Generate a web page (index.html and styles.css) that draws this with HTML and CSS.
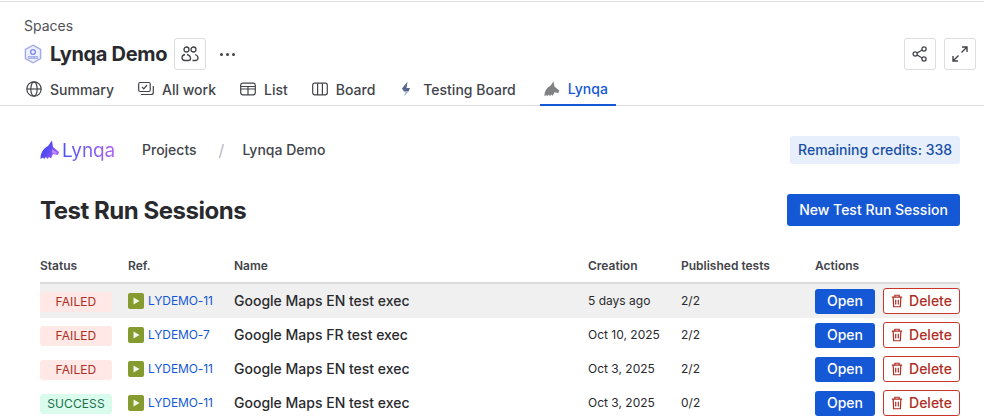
FILE: index.html
```html
<!DOCTYPE html>
<html>
<head>
  <meta charset="UTF-8">
  <title>Lynqa Demo</title>
  <link rel="stylesheet" href="styles.css">
</head>
<body>
  <svg class="defs" width="0" height="0">
    <defs>
      <linearGradient id="catGrad" x1="0" y1="0" x2="1" y2=".6">
        <stop offset="0" stop-color="#3c46ee"/>
        <stop offset=".55" stop-color="#5a4cf2"/>
        <stop offset="1" stop-color="#a85cf4"/>
      </linearGradient>
      <symbol id="play" viewBox="0 0 16 16">
        <rect width="16" height="16" rx="2" fill="#859a2f"/>
        <path d="M5.500 4.500 11.500 8 5.500 11.500z" fill="#f4f6e8"/>
      </symbol>
      <symbol id="trash" viewBox="0 0 14 16">
        <path d="M1 3.500h12M4.500 3.500V1.300h5v2.200M2.500 3.500l.6 11.200h7.800l.6-11.200M5.500 6.500v5.500M8.500 6.500v5.500" fill="none" stroke="currentColor" stroke-width="1.400"/>
      </symbol>
    </defs>
  </svg>

  <header class="space-head">
    <div class="crumb">Spaces</div>
    <div class="title-row">
      <svg class="space-icon" width="18" height="20" viewBox="0 0 18 20">
        <path d="M9 1.200 16.600 5.500v9L9 18.800 1.400 14.500v-9z" fill="#eef0fd" stroke="#a0abee" stroke-width="1.400"/>
        <circle cx="9" cy="8" r="2.400" fill="none" stroke="#7f8de2" stroke-width="1.400"/>
        <text class="demo-text" x="9" y="14.500">DEMO</text>
      </svg>
      <h1>Lynqa Demo</h1>
      <button class="icon-btn">
        <svg width="18" height="18" viewBox="0 0 18 18" fill="none" stroke="#42444a" stroke-width="1.300">
          <circle cx="5.500" cy="4.500" r="2.500"/>
          <circle cx="12.500" cy="4.500" r="2.500"/>
          <path d="M4 9.500C1.800 10 1 11.300 1 12.700 1 14.500 2.500 15.500 4 15.500h3.500c1.500 0 2-1 2-2 0-1.800-1.500-3.500-3.500-4M11.500 15.500H14c1.800 0 3-1 3-2.500 0-1.800-1.300-3-3-3.500"/>
        </svg>
      </button>
      <button class="more">
        <i></i><i></i><i></i>
      </button>
      <div class="head-actions">
        <button class="icon-btn">
          <svg width="16" height="16" viewBox="0 0 16 16" fill="none" stroke="#42444a" stroke-width="1.300">
            <circle cx="3.200" cy="8" r="2.100"/>
            <circle cx="12" cy="3" r="2.100"/>
            <circle cx="12" cy="13" r="2.100"/>
            <path d="M5 7 10.200 4M5 9l5.200 3"/>
          </svg>
        </button>
        <button class="icon-btn">
          <svg width="16" height="16" viewBox="0 0 16 16" fill="none" stroke="#42444a" stroke-width="1.400">
            <path d="M9.500 6.500 15 1M10 1h5v5M6.500 9.500 1 15M1 10v5h5"/>
          </svg>
        </button>
      </div>
    </div>
    <nav class="tabs">
      <a class="tab">
        <svg width="16" height="16" viewBox="0 0 16 16" fill="none" stroke="#42444a" stroke-width="1.200">
          <circle cx="8" cy="8" r="7.200"/>
          <ellipse cx="8" cy="8" rx="3.200" ry="7.200"/>
          <path d="M1 8h14"/>
        </svg>
        Summary
      </a>
      <a class="tab">
        <svg width="16" height="16" viewBox="0 0 16 16" fill="none" stroke="#42444a" stroke-width="1.200">
          <rect x=".7" y="1.500" width="11.500" height="9" rx="1.500"/>
          <path d="M4 6l1.800 1.800L9 4M15.300 5v6.500a2 2 0 0 1-2 2H3"/>
        </svg>
        All work
      </a>
      <a class="tab">
        <svg width="16" height="16" viewBox="0 0 16 16" fill="none" stroke="#42444a" stroke-width="1.200">
          <rect x=".7" y="2.200" width="14.600" height="11.600" rx="2"/>
          <path d="M.7 8h14.600M.7 5.500h14.600M8 5.500v8.300"/>
        </svg>
        List
      </a>
      <a class="tab">
        <svg width="16" height="16" viewBox="0 0 16 16" fill="none" stroke="#42444a" stroke-width="1.200">
          <rect x=".7" y="2.200" width="14.600" height="11.600" rx="2"/>
          <path d="M5.600 2.200v11.600M10.400 2.200v11.600"/>
        </svg>
        Board
      </a>
      <a class="tab">
        <svg width="16" height="16" viewBox="0 0 16 16">
          <path d="M8.500 .8 3 7.500 5 10.500H9.500L11 7H7.500z" fill="#56658a"/>
          <path d="M9.500 10.500H6.500L5 15.500z" fill="#aab3c6"/>
        </svg>
        Testing Board
      </a>
      <a class="tab active">
        <svg width="16" height="16" viewBox="0 0 20 20">
          <path d="M.5 19C.5 13 3 8.500 8 6L12 .5l1 6.500 6 5-1 3-5-1-2 4.500-2-1.500-1.500 2-1.500-2-2 2-1-1.500z" fill="#7f8184"/>
        </svg>
        Lynqa
      </a>
    </nav>
  </header>

  <main class="content">
    <div class="app-bar">
      <div class="brand">
        <svg width="20" height="20" viewBox="0 0 20 20">
          <path d="M.5 19C.5 13 3 8.500 8 6L12 .5l1 6.500 6 5-1 3-5-1-2 4.500-2-1.500-1.500 2-1.500-2-2 2-1-1.500z" fill="url(#catGrad)"/>
          <path d="M12 9l5 3.500-1 1.500-4-1z" fill="#b78cf8"/>
        </svg>
        <span class="brand-name">Lynqa</span>
      </div>
      <span class="bc">Projects</span>
      <span class="bc-sep">/</span>
      <span class="bc">Lynqa Demo</span>
      <span class="credits">Remaining credits: 338</span>
    </div>

    <div class="page-head">
      <h2>Test Run Sessions</h2>
      <button class="btn-primary">New Test Run Session</button>
    </div>

    <table class="sessions">
      <colgroup>
        <col class="c-status"><col class="c-ref"><col class="c-name"><col class="c-date"><col class="c-pub"><col class="c-act">
      </colgroup>
      <thead>
        <tr><th>Status</th><th>Ref.</th><th>Name</th><th>Creation</th><th>Published tests</th><th>Actions</th></tr>
      </thead>
      <tbody>
        <tr class="hover">
          <td><span class="lozenge failed">FAILED</span></td>
          <td><span class="ref"><svg width="16" height="16"><use href="#play"/></svg><a>LYDEMO-11</a></span></td>
          <td class="name">Google Maps EN test exec</td>
          <td>5 days ago</td>
          <td>2/2</td>
          <td><span class="acts"><button class="open">Open</button><button class="del"><svg width="12" height="14"><use href="#trash"/></svg>Delete</button></span></td>
        </tr>
        <tr>
          <td><span class="lozenge failed">FAILED</span></td>
          <td><span class="ref"><svg width="16" height="16"><use href="#play"/></svg><a>LYDEMO-7</a></span></td>
          <td class="name">Google Maps FR test exec</td>
          <td>Oct 10, 2025</td>
          <td>2/2</td>
          <td><span class="acts"><button class="open">Open</button><button class="del"><svg width="12" height="14"><use href="#trash"/></svg>Delete</button></span></td>
        </tr>
        <tr>
          <td><span class="lozenge failed">FAILED</span></td>
          <td><span class="ref"><svg width="16" height="16"><use href="#play"/></svg><a>LYDEMO-11</a></span></td>
          <td class="name">Google Maps EN test exec</td>
          <td>Oct 3, 2025</td>
          <td>2/2</td>
          <td><span class="acts"><button class="open">Open</button><button class="del"><svg width="12" height="14"><use href="#trash"/></svg>Delete</button></span></td>
        </tr>
        <tr>
          <td><span class="lozenge success">SUCCESS</span></td>
          <td><span class="ref"><svg width="16" height="16"><use href="#play"/></svg><a>LYDEMO-11</a></span></td>
          <td class="name">Google Maps EN test exec</td>
          <td>Oct 3, 2025</td>
          <td>0/2</td>
          <td><span class="acts"><button class="open">Open</button><button class="del"><svg width="12" height="14"><use href="#trash"/></svg>Delete</button></span></td>
        </tr>
      </tbody>
    </table>
  </main>
</body>
</html>
```

FILE: styles.css
```css
html, body {
  height: 420px;
  overflow: hidden;
}
body {
  margin: 0;
  background-color: #fff;
  color: #292a2e;
  font-family: Inter, "Liberation Sans", sans-serif;
  font-size: 14px;
}
button {
  font-family: inherit;
  cursor: pointer;
}
.defs {
  position: absolute;
}

.space-head {
  margin-top: 1px;
  border-top: 1px solid #e2e2e4;
  border-bottom: 1px solid #dcdcde;
  padding: 16px 8px 0 24px;
  height: 87px;
}
.crumb {
  color: #505258;
  font-size: 14px;
  line-height: 16px;
}
.title-row {
  display: flex;
  align-items: center;
  height: 32px;
  margin-top: 4px;
}
.space-icon {
  margin-right: 8px;
}
.demo-text {
  font-size: 3.500px;
  font-weight: 700;
  text-anchor: middle;
  fill: #7f8de2;
}
h1 {
  margin: 0 7px 0 0;
  font-size: 20px;
  font-weight: 700;
  line-height: 24px;
  letter-spacing: -0.3px;
}
.icon-btn {
  display: flex;
  align-items: center;
  justify-content: center;
  width: 32px;
  height: 32px;
  padding: 0;
  background: #fff;
  border: 1px solid #dcdcde;
  border-radius: 3px;
}
.more {
  display: flex;
  gap: 3px;
  margin-left: 14px;
  padding: 0;
  border: 0;
  background: none;
}
.more i {
  width: 3px;
  height: 3px;
  border-radius: 50%;
  background: #42444a;
}
.head-actions {
  display: flex;
  gap: 8px;
  margin-left: auto;
}
.tabs {
  display: flex;
  gap: 24px;
  margin-top: 1px;
  height: 35px;
}
.tab {
  display: flex;
  align-items: center;
  gap: 8px;
  height: 32px;
  padding-top: 2px;
  color: #42444a;
  font-weight: 500;
  font-size: 14px;
  margin-left: 2px;
  margin-right: -2px;
}
.tab.active {
  color: #1558d6;
  border-bottom: 2px solid #1558d6;
  margin: 0 0 0 2px;
  padding: 2px 8px 0 4px;
  height: 31px;
}

.content {
  padding: 30px 24px 0 40px;
}
.app-bar {
  display: flex;
  align-items: center;
  height: 28px;
}
.brand {
  display: flex;
  align-items: center;
  gap: 2px;
  width: 102px;
}
.brand-name {
  font-size: 19px;
  letter-spacing: -0.1px;
  background: linear-gradient(90deg, #4a55f0, #b163ee);
  -webkit-background-clip: text;
  background-clip: text;
  color: transparent;
}
.bc {
  color: #42444a;
  font-weight: 500;
  font-size: 14px;
  padding-bottom: 2px;
}
.bc-sep {
  color: #b5b7bb;
  font-size: 16px;
  margin: 0 18px 0 22px;
}
.credits {
  margin-left: auto;
  padding: 0 8px;
  line-height: 28px;
  color: #174ea6;
  background: #e6effb;
  border-radius: 3px;
  font-weight: 500;
}
.page-head {
  display: flex;
  align-items: center;
  justify-content: space-between;
  margin-top: 30px;
  height: 32px;
}
h2 {
  margin: 0;
  font-size: 24px;
  font-weight: 700;
  letter-spacing: -0.47px;
}
.btn-primary {
  height: 32px;
  width: 173px;
  padding: 0 0 2px;
  border: 0;
  border-radius: 3px;
  background: #1558d6;
  color: #fff;
  font-size: 14px;
  font-weight: 500;
}

.sessions {
  table-layout: fixed;
  width: 920px;
  margin-top: 24px;
  border-collapse: collapse;
  font-size: 12px;
}
.c-status { width: 88px; }
.c-ref { width: 106px; }
.c-name { width: 354px; }
.c-date { width: 93px; }
.c-pub { width: 134px; }
.c-act { width: 145px; }
th {
  height: 30px;
  padding: 0 0 2px;
  text-align: left;
  color: #42444a;
  font-weight: 600;
  font-size: 12px;
  border-bottom: 2px solid #dcdcde;
}
td {
  height: 32px;
  padding: 0 0 2px;
  font-weight: 400;
}
tr.hover td {
  background: #f0f0f0;
}
.lozenge {
  display: block;
  width: 72px;
  height: 20px;
  margin-top: 4px;
  line-height: 20px;
  text-align: center;
  font-size: 12px;
  letter-spacing: 0.1px;
  border-radius: 3px;
}
.failed {
  background: #ffe8e6;
  color: #ae2e24;
}
.success {
  background: #d9fcec;
  color: #216e4e;
}
.ref {
  display: flex;
  align-items: center;
  gap: 4px;
  margin-top: 2px;
  color: #1558d6;
  letter-spacing: -0.1px;
}
.ref a {
  margin-top: -2px;
}
.name {
  font-size: 14px;
  font-weight: 500;
}
.acts {
  display: flex;
  align-items: center;
  gap: 8px;
  margin-top: 2px;
}
.open {
  width: 60px;
  height: 25px;
  padding: 0 0 2px;
  border: 0;
  border-radius: 3px;
  background: #1558d6;
  color: #fff;
  font-size: 14px;
  font-weight: 500;
}
.del {
  display: flex;
  align-items: center;
  justify-content: center;
  gap: 6px;
  width: 77px;
  height: 26px;
  padding: 0 0 1px;
  background: #fff;
  border: 1px solid #c9372c;
  border-radius: 3px;
  color: #ae2e24;
  font-size: 14px;
  font-weight: 500;
}
```
